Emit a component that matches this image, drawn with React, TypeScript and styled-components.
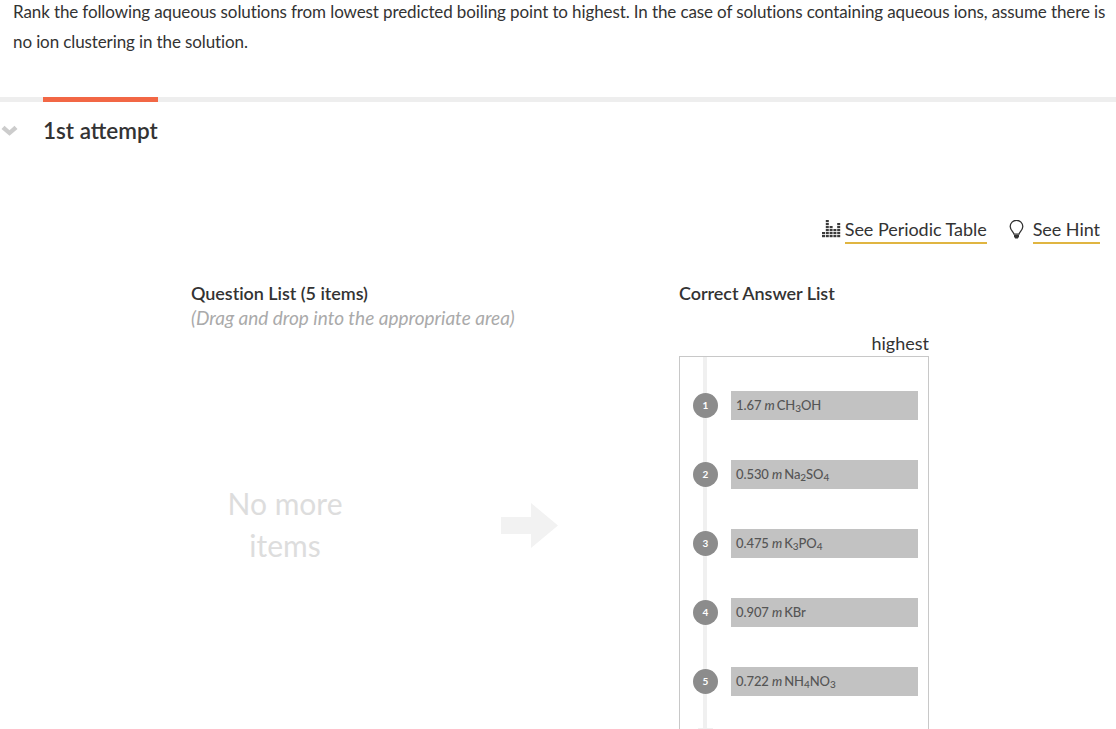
import React from 'react';
import styled, { createGlobalStyle } from 'styled-components';

const GlobalStyle = createGlobalStyle`
  html, body {
    margin: 0;
    padding: 0;
    height: 729px;
    overflow: hidden;
    background: #fff;
    font-family: Lato, 'Open Sans', sans-serif;
    color: #333;
  }
`;

const Page = styled.div`
  width: 1116px;
  height: 729px;
  overflow: hidden;
`;

const Prompt = styled.p`
  margin: 0;
  padding: 0 0 0 13px;
  height: 100px;
  margin-top: -3px;
  font-size: 17px;
  line-height: 30px;
  letter-spacing: -0.11px;
  color: #333;
  white-space: nowrap;
`;

const TabRail = styled.div`
  height: 5px;
  background: #eee;
  padding-left: 43px;
`;

const TabMark = styled.div`
  width: 115px;
  height: 5px;
  background: #f26745;
`;

const AttemptRow = styled.div`
  display: flex;
  align-items: center;
  height: 57px;
`;

const Chevron = styled.svg`
  width: 17px;
  height: 11px;
  margin-left: 1px;
  margin-right: 25px;
`;

const AttemptTitle = styled.h2`
  margin: 0;
  font-size: 22.5px;
  font-weight: 600;
  color: #333;
`;

const ToolLinks = styled.div`
  display: flex;
  justify-content: flex-end;
  align-items: flex-start;
  height: 64px;
  margin-top: 58px;
  padding-right: 16px;
`;

const ToolIcon = styled.svg<{ $gap: number }>`
  flex: none;
  margin-top: 3px;
  margin-right: ${(p) => p.$gap}px;
`;

const ToolLink = styled.a<{ $space?: number }>`
  display: block;
  height: 24px;
  padding-top: 1px;
  font-size: 18px;
  line-height: 22px;
  letter-spacing: -0.04px;
  color: #333;
  border-bottom: 2px solid #e0b541;
  margin-right: ${(p) => p.$space ?? 0}px;
`;

const Columns = styled.div`
  display: flex;
  padding-left: 191px;
`;

const SourceColumn = styled.section`
  width: 488px;
`;

const ColumnTitle = styled.h3`
  margin: 0;
  font-size: 18px;
  line-height: 24px;
  font-weight: 600;
  letter-spacing: -0.05px;
  color: #333;
`;

const DragNote = styled.div`
  font-size: 19px;
  line-height: 26px;
  font-style: italic;
  color: #aaa;
`;

const EmptyZone = styled.div`
  display: flex;
  align-items: center;
  margin-top: 151px;
`;

const EmptyText = styled.div`
  width: 188px;
  font-size: 30px;
  line-height: 42px;
  text-align: center;
  color: #ddd;
`;

const DropArrow = styled.svg`
  width: 57px;
  height: 45px;
  margin-left: 122px;
  margin-top: 2px;
`;

const AnswerColumn = styled.section`
  width: 250px;
`;

const TopLabel = styled.div`
  margin-top: 25px;
  height: 26px;
  font-size: 18px;
  line-height: 26px;
  text-align: right;
  color: #333;
`;

const AnswerBox = styled.div`
  position: relative;
  box-sizing: border-box;
  width: 250px;
  height: 374px;
  border: 1px solid #c8c8c8;
  border-bottom: none;
  padding: 34px 10px 0 13px;
  display: flex;
  flex-direction: column;
  gap: 40px;
  &::before {
    content: '';
    position: absolute;
    left: 23px;
    top: 0;
    bottom: 0;
    width: 4px;
    background: #f0f0f0;
  }
  &::after {
    content: '';
    position: absolute;
    left: 18px;
    bottom: 0;
    width: 15px;
    height: 2px;
    background: #f0f0f0;
  }
`;

const AnswerRow = styled.div`
  position: relative;
  z-index: 1;
  display: flex;
  align-items: center;
  height: 29px;
`;

const RankBadge = styled.span`
  flex: none;
  width: 25px;
  height: 25px;
  margin-right: 13px;
  border-radius: 50%;
  background: #8c8c8c;
  color: #fff;
  font-size: 10px;
  font-weight: 700;
  line-height: 25px;
  text-align: center;
`;

const AnswerChip = styled.div`
  flex: 1;
  height: 29px;
  box-sizing: border-box;
  padding-left: 5px;
  background: #c2c2c2;
  font-size: 13px;
  font-weight: 500;
  line-height: 29px;
  letter-spacing: -0.08px;
  color: #555;
  white-space: nowrap;
  sub {
    font-size: 10px;
    line-height: 0;
    vertical-align: -2px;
  }
  i {
    margin-right: 2px;
  }
`;

type Answer = { amount: string; formula: React.ReactNode };

const answers: Answer[] = [
  { amount: '1.67', formula: <>CH<sub>3</sub>OH</> },
  { amount: '0.530', formula: <>Na<sub>2</sub>SO<sub>4</sub></> },
  { amount: '0.475', formula: <>K<sub>3</sub>PO<sub>4</sub></> },
  { amount: '0.907', formula: <>KBr</> },
  { amount: '0.722', formula: <>NH<sub>4</sub>NO<sub>3</sub></> },
];

// rows of dots per column in the periodic table icon
const tableBars = [2, 6, 4, 3, 5];

const PeriodicIcon = () => (
  <ToolIcon $gap={4} width="20" height="18" viewBox="0 0 20 18">
    {tableBars.map((bars, col) =>
      Array.from({ length: bars }).map((_, row) => (
        <rect key={`${col}-${row}`} x={1 + col * 3.8} y={15 - row * 3} width="3" height="2.2" fill="#3a3a3a" />
      ))
    )}
  </ToolIcon>
);

const BulbIcon = () => (
  <ToolIcon $gap={9} width="15" height="19" viewBox="0 0 15 19">
    <path
      d="M5 14.2C4.6 11.8 1.2 10.2 1.2 6.6a6.3 6.3 0 0 1 12.6 0c0 3.6-3.4 5.2-3.800 7.600z"
      fill="none"
      stroke="#333"
      strokeWidth="1.3"
    />
    <path d="M5 15h5v1.800L8.800 18.500H6.200L5 16.800z" fill="#333" />
  </ToolIcon>
);

export default function App() {
  return (
    <Page>
      <GlobalStyle />
      <Prompt>
        Rank the following aqueous solutions from lowest predicted boiling point to highest. In the case of solutions containing aqueous ions, assume there is
        <br />
        no ion clustering in the solution.
      </Prompt>
      <TabRail>
        <TabMark />
      </TabRail>
      <AttemptRow>
        <Chevron viewBox="0 0 17 11">
          <path d="M0.5 4 3.500 0.800 8.500 5.200 13.500 0.800 16.500 4 8.500 10.800z" fill="#ccc" />
        </Chevron>
        <AttemptTitle>1st attempt</AttemptTitle>
      </AttemptRow>
      <ToolLinks>
        <PeriodicIcon />
        <ToolLink $space={22}>See Periodic Table</ToolLink>
        <BulbIcon />
        <ToolLink>See Hint</ToolLink>
      </ToolLinks>
      <Columns>
        <SourceColumn>
          <ColumnTitle>Question List (5 items)</ColumnTitle>
          <DragNote>(Drag and drop into the appropriate area)</DragNote>
          <EmptyZone>
            <EmptyText>
              No more
              <br />
              items
            </EmptyText>
            <DropArrow viewBox="0 0 57 45">
              <path d="M0 14h30V0l27 22.500L30 45V31H0z" fill="#f2f2f2" />
            </DropArrow>
          </EmptyZone>
        </SourceColumn>
        <AnswerColumn>
          <ColumnTitle>Correct Answer List</ColumnTitle>
          <TopLabel>highest</TopLabel>
          <AnswerBox>
            {answers.map((answer, index) => (
              <AnswerRow key={answer.amount}>
                <RankBadge>{index + 1}</RankBadge>
                <AnswerChip>
                  {answer.amount} <i>m</i>
                  {answer.formula}
                </AnswerChip>
              </AnswerRow>
            ))}
          </AnswerBox>
        </AnswerColumn>
      </Columns>
    </Page>
  );
}
